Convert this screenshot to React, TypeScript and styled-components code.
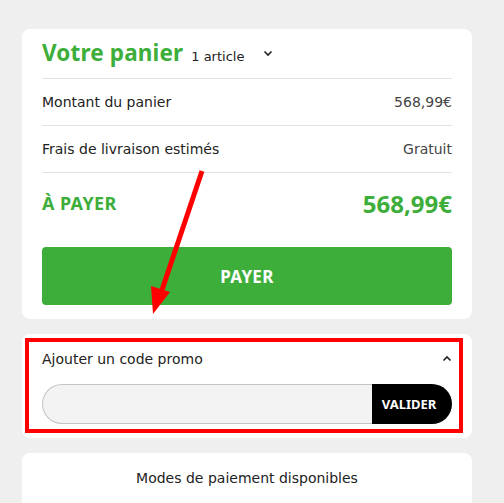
import React from "react";
import styled, { createGlobalStyle } from "styled-components";

const Global = createGlobalStyle`
  html, body { margin: 0; padding: 0; background: #efefef; }
  body { font-family: "DejaVu Sans", "Liberation Sans", sans-serif; color: #222; }
  * { box-sizing: border-box; }
`;

const GREEN = "#3dae3a";
const BOLD = `"Noto Sans", "Open Sans", sans-serif`;

const Page = styled.div`
  position: relative;
  width: 504px;
  height: 503px;
  overflow: hidden;
  padding: 29px 0 0 22px;
  display: flex;
  flex-direction: column;
  gap: 15px;
`;

const Card = styled.section`
  position: relative;
  width: 450px;
  background: #fff;
  border-radius: 8px;
  padding: 0 20px 14px;
  display: flex;
  flex-direction: column;
  flex-shrink: 0;
`;

const Header = styled.div`
  height: 50px;
  display: flex;
  align-items: center;
  border-bottom: 1px solid #e2e2e2;
`;

const TitleGroup = styled.div`
  display: flex;
  align-items: baseline;
  gap: 8px;
`;

const Title = styled.h1`
  margin: 0;
  font-family: ${BOLD};
  font-weight: 700;
  font-size: 22.5px;
  letter-spacing: 0.15px;
  color: ${GREEN};
  line-height: 1;
`;

const Count = styled.span`
  font-size: 13px;
  color: #222;
`;

const Chevron = styled.svg`
  display: block;
`;

const ToggleBtn = styled.span<{ $ml?: number }>`
  display: inline-flex;
  margin-left: ${(p) => p.$ml ?? 0}px;
  color: #222;
`;

const Row = styled.div<{ $h: number; $line?: boolean }>`
  height: ${(p) => p.$h}px;
  display: flex;
  align-items: center;
  justify-content: space-between;
  border-bottom: ${(p) => (p.$line ? "1px solid #e2e2e2" : "none")};
  font-size: 14px;
`;

const Label = styled.span`
  color: #222;
`;

const Value = styled.span`
  color: #444;
`;

const TotalLabel = styled.span`
  font-family: ${BOLD};
  font-weight: 700;
  font-size: 18px;
  letter-spacing: 0.4px;
  color: ${GREEN};
`;

const TotalValue = styled.span`
  font-family: ${BOLD};
  font-weight: 700;
  font-size: 24px;
  color: ${GREEN};
`;

const PayButton = styled.button`
  margin-top: 14px;
  height: 58px;
  width: 100%;
  border: none;
  border-radius: 4px;
  background: ${GREEN};
  color: #fff;
  font-family: ${BOLD};
  font-weight: 700;
  font-size: 17px;
  letter-spacing: 0.3px;
  cursor: pointer;
`;

const PromoHeader = styled.div`
  height: 49px;
  display: flex;
  align-items: center;
  justify-content: space-between;
  font-size: 14px;
  color: #222;
`;

const PromoForm = styled.div`
  margin-top: 1px;
  display: flex;
  height: 40px;
`;

const PromoInput = styled.input`
  flex: 1;
  height: 40px;
  border: 1px solid #c4c4c4;
  border-right: none;
  border-radius: 20px 0 0 20px;
  background: #f3f3f3;
  outline: none;
`;

const ValidateButton = styled.button`
  width: 80px;
  height: 40px;
  border: none;
  border-radius: 0 20px 20px 0;
  background: #000;
  color: #fff;
  font-family: ${BOLD};
  font-weight: 700;
  font-size: 13px;
  padding: 0 6px 0 0;
`;

const Highlight = styled.div`
  position: absolute;
  left: 3px;
  top: 4px;
  width: 438px;
  height: 95px;
  border: 4px solid #ff0000;
  pointer-events: none;
`;

const MethodsTitle = styled.div`
  height: 50px;
  display: flex;
  align-items: center;
  justify-content: center;
  font-size: 14px;
  color: #222;
`;

const ArrowOverlay = styled.svg`
  position: absolute;
  left: 0;
  top: 0;
  pointer-events: none;
`;

const Down = () => (
  <Chevron width="10" height="7" viewBox="0 0 10 7">
    <path d="M1.5 1.5 L5 5 L8.5 1.5" fill="none" stroke="#222" strokeWidth="1.6" />
  </Chevron>
);

const Up = () => (
  <Chevron width="10" height="7" viewBox="0 0 10 7">
    <path d="M1.5 5.5 L5 2 L8.5 5.5" fill="none" stroke="#222" strokeWidth="1.6" />
  </Chevron>
);

export default function App() {
  return (
    <>
      <Global />
      <Page>
        <Card>
          <Header>
            <TitleGroup>
              <Title>Votre panier</Title>
              <Count>1 article</Count>
            </TitleGroup>
            <ToggleBtn $ml={19}>
              <Down />
            </ToggleBtn>
          </Header>
          <Row $h={47} $line>
            <Label>Montant du panier</Label>
            <Value>568,99€</Value>
          </Row>
          <Row $h={47} $line>
            <Label>Frais de livraison estimés</Label>
            <Value>Gratuit</Value>
          </Row>
          <Row $h={60}>
            <TotalLabel>À PAYER</TotalLabel>
            <TotalValue>568,99€</TotalValue>
          </Row>
          <PayButton>PAYER</PayButton>
        </Card>

        <Card>
          <PromoHeader>
            <span>Ajouter un code promo</span>
            <Up />
          </PromoHeader>
          <PromoForm>
            <PromoInput type="text" />
            <ValidateButton>VALIDER</ValidateButton>
          </PromoForm>
          <Highlight />
        </Card>

        <Card>
          <MethodsTitle>Modes de paiement disponibles</MethodsTitle>
        </Card>

        <ArrowOverlay width="504" height="503" viewBox="0 0 504 503">
          <line x1="202" y1="171" x2="162" y2="290" stroke="#ff0000" strokeWidth="5" />
          <polygon points="151,286 170,292 153,314" fill="#ff0000" />
        </ArrowOverlay>
      </Page>
    </>
  );
}
